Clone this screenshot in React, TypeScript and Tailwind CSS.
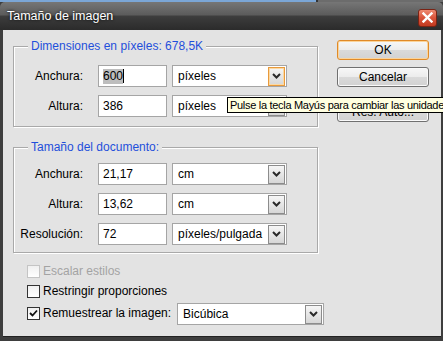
import React from 'react';

const font = { fontFamily: '"Liberation Sans", Arial, sans-serif' };

const Chevron = () => (
  <svg width="9" height="6" viewBox="0 0 9 6">
    <polyline points="1,1 4.5,4.5 8,1" fill="none" stroke="#2a2a2a" strokeWidth="2" />
  </svg>
);

function DropButton({ focused }: { focused?: boolean }) {
  return (
    <div
      className={`w-[17px] h-[19px] mr-[1px] flex items-center justify-center border bg-[linear-gradient(to_bottom,#f6f6f6,#d6d6d6)] ${
        focused ? 'border-[#e89a3c] shadow-[inset_0_0_0_1px_#fbd9a4]' : 'border-[#8c8c8c]'
      }`}
    >
      <Chevron />
    </div>
  );
}

function Select({ value, width, focused }: { value: string; width: string; focused?: boolean }) {
  return (
    <div className={`${width} shrink-0 h-[22px] bg-white border border-[#a5a5a5] flex items-center justify-between`}>
      <span className="pl-[5px] text-[12px] text-black whitespace-nowrap">{value}</span>
      <DropButton focused={focused} />
    </div>
  );
}

function Row({ label, value, unit, focused, selected }: { label: string; value: string; unit: string; focused?: boolean; selected?: boolean }) {
  return (
    <div className="flex items-center h-[22px]">
      <div className="w-[69px] text-right text-[12px] text-black">{label}</div>
      <div className="ml-[15px] w-[69px] h-[22px] bg-white border border-[#a5a5a5] flex items-center pl-[4px] text-[12px] text-black">
        {selected ? (
          <>
            <span className="bg-[#bdbdbd] leading-[15px]">{value}</span>
            <span className="w-[1px] h-[14px] bg-black" />
          </>
        ) : (
          <span>{value}</span>
        )}
      </div>
      <div className="ml-[5px]">
        <Select value={unit} width="w-[115px]" focused={focused} />
      </div>
    </div>
  );
}

function Group({ title, children, className }: { title: string; children: React.ReactNode; className: string }) {
  return (
    <div className={`relative w-[305px] border border-[#a9a9a9] shadow-[inset_1px_1px_0_#fff,1px_1px_0_#fff] ${className}`}>
      <span className="absolute left-[14px] -top-[8px] px-[3px] bg-[#e3e3e3] text-[12px] leading-[14px] text-[#1f4fdb] whitespace-nowrap">
        {title}
      </span>
      {children}
    </div>
  );
}

function Check({ label, checked, disabled }: { label: string; checked?: boolean; disabled?: boolean }) {
  return (
    <div className="flex items-center gap-[3px] whitespace-nowrap shrink-0">
      <div
        className={`w-[13px] h-[13px] border flex items-center justify-center bg-[linear-gradient(to_bottom,#f0f0f0,#ffffff)] ${
          disabled ? 'border-[#c4c4c4]' : 'border-[#333]'
        }`}
      >
        {checked && (
          <svg width="9" height="8" viewBox="0 0 9 8">
            <polyline points="1,4 3.5,6.5 8,1.5" fill="none" stroke="#111" strokeWidth="1.8" />
          </svg>
        )}
      </div>
      <span className={`text-[12px] leading-[14px] ${disabled ? 'text-[#a3a3a3]' : 'text-black'}`}>{label}</span>
    </div>
  );
}

function Button({ label, primary, className = '' }: { label: string; primary?: boolean; className?: string }) {
  return (
    <div
      className={`w-[92px] h-[20px] rounded-[3px] border flex items-center justify-center text-[12px] text-black bg-[linear-gradient(to_bottom,#f7f7f7_0%,#ececec_50%,#dadada_51%,#d2d2d2_100%)] ${
        primary ? 'border-[#e08a28] shadow-[inset_0_0_0_1px_#fbd49a]' : 'border-[#707070] shadow-[inset_0_0_0_1px_#fafafa]'
      } ${className}`}
    >
      {label}
    </div>
  );
}

export default function App() {
  return (
    <div className="relative w-[443px] h-[341px] overflow-hidden bg-[#3e3e3e] flex flex-col" style={font}>
      {/* top edge of window behind */}
      <div className="h-[2px] flex">
        <div className="w-[316px] bg-[#7ba6d6]" />
        <div className="w-[2px] bg-[#333]" />
        <div className="flex-1 bg-[#6c6c6c]" />
      </div>
      {/* title bar */}
      <div className="h-[28px] flex items-center justify-between pl-[7px] pr-[6px] rounded-t-[5px] bg-[linear-gradient(to_bottom,#767676_0%,#5c5c5c_45%,#3c3c3c_52%,#2b2b2b_100%)]">
        <span className="text-white text-[12.5px] [text-shadow:0_0_3px_#000]">Tamaño de imagen</span>
        <div className="w-[19px] h-[18px] mt-[3px] rounded-[3px] border border-[#7a2314] bg-[linear-gradient(to_bottom,#ee8a72_0%,#d9533a_50%,#c13a20_100%)] flex items-center justify-center">
          <svg width="11" height="11" viewBox="0 0 11 11">
            <path d="M1.5 1.5 L9.5 9.5 M9.5 1.5 L1.5 9.5" stroke="#fff" strokeWidth="2.4" strokeLinecap="square" />
          </svg>
        </div>
      </div>
      {/* body */}
      <div className="ml-[3px] mr-[2px] h-[307px] bg-[#e3e3e3] flex border-b border-[#222]">
        <div className="w-[316px] shrink-0 pl-[10px] flex flex-col">
          <Group title="Dimensiones en píxeles: 678,5K" className="mt-[16px] pt-[18px] pb-[9px]">
            <div className="flex flex-col gap-[8px]">
              <Row label="Anchura:" value="600" unit="píxeles" focused selected />
              <Row label="Altura:" value="386" unit="píxeles" />
            </div>
          </Group>
          <Group title="Tamaño del documento:" className="mt-[20px] pt-[15px] pb-[7px]">
            <div className="flex flex-col gap-[8px]">
              <Row label="Anchura:" value="21,17" unit="cm" />
              <Row label="Altura:" value="13,62" unit="cm" />
              <Row label="Resolución:" value="72" unit="píxeles/pulgada" />
            </div>
          </Group>
          <div className="pl-[14px] pt-[11px] flex flex-col gap-[6px]">
            <Check label="Escalar estilos" disabled />
            <Check label="Restringir proporciones" />
            <div className="flex items-start gap-[6px] -mt-[1px]">
              <div className="mt-[3px]">
                <Check label="Remuestrear la imagen:" checked />
              </div>
              <Select value="Bicúbica" width="w-[147px]" />
            </div>
          </div>
        </div>
        <div className="ml-[18px] pt-[10px] flex flex-col gap-[7px]">
          <Button label="OK" primary />
          <Button label="Cancelar" />
          <Button label="Res. Auto..." className="mt-[8px]" />
        </div>
      </div>
      {/* tooltip */}
      <div className="absolute left-[227px] top-[97px] h-[16px] border border-black bg-[#ffffe1] px-[2px] flex items-center text-[11px] tracking-[-0.3px] text-black whitespace-nowrap">
        Pulse la tecla Mayús para cambiar las unidades
      </div>
    </div>
  );
}
